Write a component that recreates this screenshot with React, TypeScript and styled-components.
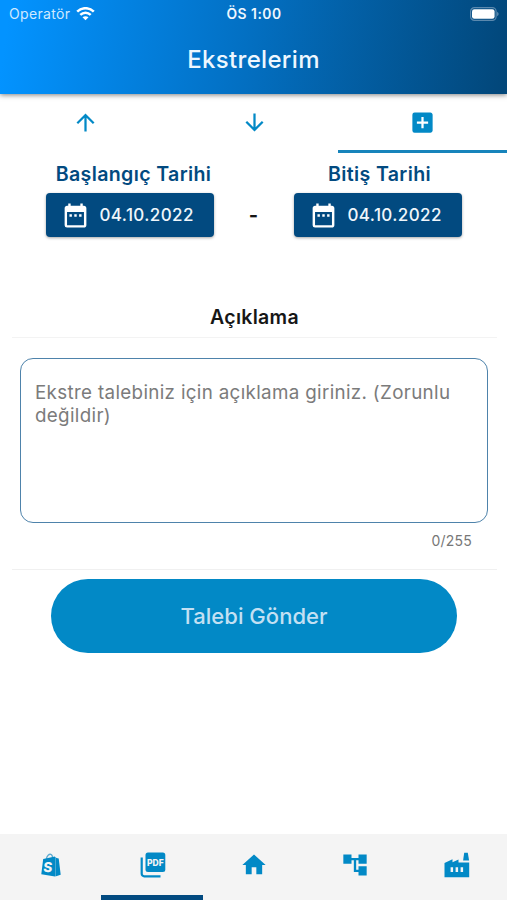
import React from "react";
import styled, { createGlobalStyle } from "styled-components";
import {
  MdAccountTree,
  MdAddBox,
  MdArrowDownward,
  MdArrowUpward,
  MdDateRange,
  MdHome,
} from "react-icons/md";

const blue = "#0289c6";
const navy = "#024a80";

const GlobalStyle = createGlobalStyle`
  * { box-sizing: border-box; }
  body { margin: 0; background: #fff; font-family: Inter, "Liberation Sans", sans-serif; }
  button, textarea { font-family: inherit; }
`;

const Screen = styled.div`
  width: 507px;
  height: 900px;
  display: flex;
  flex-direction: column;
  overflow: hidden;
  background: #fff;
`;

const Header = styled.header`
  height: 94px;
  flex: none;
  color: #eef7ff;
  background: linear-gradient(98deg, #0393ff 2%, #0370c3 48%, #02477a 99%);
  box-shadow: 0 1px 5px rgba(0, 0, 0, 0.5);
`;

const StatusBar = styled.div`
  height: 27px;
  display: grid;
  grid-template-columns: 1fr auto 1fr;
  align-items: center;
  padding: 0 8px 0 9px;
`;

const Carrier = styled.div`
  display: flex;
  align-items: center;
  gap: 6px;
  font-size: 14px;
  letter-spacing: 0.35px;
  color: #cfe9ff;
`;

const Clock = styled.div`
  font-size: 13.8px;
  font-weight: 600;
  letter-spacing: 0.5px;
`;

const BatterySlot = styled.div`
  display: flex;
  justify-content: flex-end;
`;

const Title = styled.h1`
  margin: 0;
  height: 66px;
  line-height: 66px;
  text-align: center;
  font-size: 24px;
  font-weight: 500;
  letter-spacing: 0.33px;
`;

const Tabs = styled.div`
  height: 59px;
  flex: none;
  display: grid;
  grid-template-columns: repeat(3, 1fr);
`;

const Tab = styled.div<{ $active?: boolean }>`
  display: flex;
  justify-content: center;
  align-items: center;
  color: ${blue};
  font-size: 27px;
  border-bottom: 3px solid ${(p) => (p.$active ? "#1784bb" : "transparent")};

  svg { margin-left: ${(p) => (p.$active ? 0 : 1)}px; }
`;

const Dates = styled.section`
  display: grid;
  grid-template-columns: 168px 80px 168px;
  justify-content: center;
  height: 139px;
  padding-top: 9px;
`;

const DateField = styled.div`
  display: flex;
  flex-direction: column;
  align-items: center;
`;

const DateLabel = styled.div<{ $indent: number }>`
  height: 31px;
  line-height: 24px;
  padding-left: ${(p) => p.$indent}px;
  font-size: 19.6px;
  font-weight: 600;
  letter-spacing: 0.35px;
  color: ${navy};
  white-space: nowrap;
`;

const DateButton = styled.button`
  width: 168px;
  height: 44px;
  padding: 0 0 0 15px;
  display: flex;
  align-items: center;
  gap: 10px;
  border: 0;
  border-radius: 4px;
  background: ${navy};
  color: #eff6fb;
  font-size: 17px;
  font-weight: 500;
  letter-spacing: 0.4px;
  box-shadow: 0 1px 3px rgba(0, 0, 0, 0.35);

  svg { font-size: 29px; color: #fff; flex: none; }
`;

const Dash = styled.div`
  padding-top: 41px;
  text-align: center;
  font-size: 20px;
  font-weight: 700;
  line-height: 24px;
  color: #151515;
`;

const Note = styled.section`
  margin: 0 10px 0 12px;
  height: 278px;
  display: flex;
  flex-direction: column;
  border-bottom: 1px solid #f0f0f0;
`;

const NoteTitle = styled.h2`
  margin: 0;
  height: 46px;
  flex: none;
  line-height: 50px;
  border-bottom: 1px solid #f3f3f3;
  text-align: center;
  font-size: 19.5px;
  font-weight: 600;
  letter-spacing: 0.3px;
  color: #161616;
`;

const NoteInput = styled.textarea`
  display: block;
  margin: 20px 0 0 8px;
  width: 468px;
  height: 165px;
  flex: none;
  resize: none;
  outline: 0;
  border: 1.5px solid #4e83ab;
  border-radius: 13px;
  background: #fff;
  padding: 22px 14px;
  font-size: 18.8px;
  line-height: 23px;
  letter-spacing: 0.33px;

  &::placeholder { color: #7b7b7b; opacity: 1; }
`;

const Counter = styled.div`
  padding: 9px 25px 0 0;
  text-align: right;
  font-size: 14px;
  line-height: 18px;
  letter-spacing: 0.2px;
  color: #777;
`;

const Submit = styled.button`
  flex: none;
  margin: 9px 0 0 51px;
  width: 406px;
  height: 74px;
  border: 0;
  border-radius: 37px;
  background: ${blue};
  color: #c3e0f3;
  font-size: 22px;
  font-weight: 500;
  letter-spacing: 0.03px;
`;

const BottomNav = styled.nav`
  margin-top: auto;
  height: 66px;
  flex: none;
  display: grid;
  grid-template-columns: repeat(5, 1fr);
  background: #f4f4f4;
`;

const NavItem = styled.div<{ $active?: boolean }>`
  display: flex;
  align-items: center;
  justify-content: center;
  padding-left: 1px;
  color: ${blue};
  font-size: 28px;
  border-bottom: 5px solid ${(p) => (p.$active ? navy : "transparent")};

  svg { overflow: visible; }
`;

const Wifi = () => (
  <svg width="19" height="14" viewBox="0 0 19 14" fill="none" stroke="#fff" strokeWidth="2.5">
    <path d="M1.2 4.700C5.800 0 13.200 0 17.800 4.700" />
    <path d="M4.300 7.800c3-2.900 7.400-2.900 10.400 0" />
    <path d="M9.500 13.300 6.500 10.300c1.700-1.500 4.300-1.500 6 0z" fill="#fff" stroke="none" />
  </svg>
);

const Battery = () => (
  <svg width="29" height="14" viewBox="0 0 29 14">
    <rect x="0.600" y="0.600" width="25.500" height="12.800" rx="3.800" fill="none" stroke="#5b89ae" strokeWidth="1.200" />
    <rect x="2" y="2.200" width="22.600" height="9.600" rx="2.300" fill="#fff" />
    <path d="M27.300 4.800c1.600.7 1.600 3.700 0 4.400z" fill="#7ea3c1" />
  </svg>
);

const IconLabel = styled.text`
  font-family: Inter, "Liberation Sans", sans-serif;
  font-weight: 800;
  fill: #f4f4f4;
`;

const ShopBag = () => (
  <svg width="20" height="24" viewBox="0 0 20 24" fill="currentColor">
    <path d="M5.300 6C6 2.500 8 .9 9.800 1.300c1.500.4 1.800 2.400 1.800 4" fill="none" stroke="#5fabd0" strokeWidth="1.300" />
    <path d="M2.200 6 14 3.600V23.500L.3 21.300z" />
    <path d="M14.300 3.700 15.500 5l2.200.5 2 16.300-5.400 1.600z" />
    <IconLabel x="3.600" y="18.600" fontSize="13.500" transform="skewX(-5)">S</IconLabel>
  </svg>
);

const PdfStack = () => (
  <svg width="26" height="26" viewBox="0 0 26 26" fill="currentColor">
    <rect x="5.500" y=".5" width="19.800" height="19.500" rx="2.500" />
    <path d="M1.700 5.500v16.300a2.500 2.500 0 0 0 2.500 2.500h16.300" fill="none" stroke="currentColor" strokeWidth="2.200" />
    <IconLabel x="7" y="13.600" fontSize="8.500">PDF</IconLabel>
  </svg>
);

const Factory = () => (
  <svg width="26" height="26" viewBox="0 0 26 26" fill="currentColor">
    <path d="M20.200.7h3.600l1.300 7.900h-6z" />
    <path
      fillRule="evenodd"
      d="M.5 11 8.500 7.300v3l6-2.800v3h10.700v14.700H.5zM6.600 15.200v4.800h2.500v-4.800zM11.600 15.200v4.800h2.500v-4.800zM16.600 15.200v4.800h2.500v-4.800z"
    />
  </svg>
);

export default function App() {
  return (
    <Screen>
      <GlobalStyle />
      <Header>
        <StatusBar>
          <Carrier>Operatör <Wifi /></Carrier>
          <Clock>ÖS 1:00</Clock>
          <BatterySlot><Battery /></BatterySlot>
        </StatusBar>
        <Title>Ekstrelerim</Title>
      </Header>
      <Tabs>
        <Tab><MdArrowUpward /></Tab>
        <Tab><MdArrowDownward /></Tab>
        <Tab $active><MdAddBox /></Tab>
      </Tabs>
      <Dates>
        <DateField>
          <DateLabel $indent={8}>Başlangıç Tarihi</DateLabel>
          <DateButton><MdDateRange />04.10.2022</DateButton>
        </DateField>
        <Dash>-</Dash>
        <DateField>
          <DateLabel $indent={4}>Bitiş Tarihi</DateLabel>
          <DateButton><MdDateRange />04.10.2022</DateButton>
        </DateField>
      </Dates>
      <Note>
        <NoteTitle>Açıklama</NoteTitle>
        <NoteInput maxLength={255} placeholder="Ekstre talebiniz için açıklama giriniz. (Zorunlu değildir)" />
        <Counter>0/255</Counter>
      </Note>
      <Submit>Talebi Gönder</Submit>
      <BottomNav>
        <NavItem><ShopBag /></NavItem>
        <NavItem $active><PdfStack /></NavItem>
        <NavItem><MdHome /></NavItem>
        <NavItem><MdAccountTree /></NavItem>
        <NavItem><Factory /></NavItem>
      </BottomNav>
    </Screen>
  );
}
